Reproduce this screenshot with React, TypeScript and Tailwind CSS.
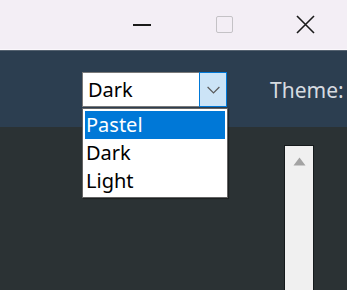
import { useState } from 'react'

const themes = ['Pastel', 'Dark', 'Light']

function TitleBar() {
  return (
    <div className="h-[50px] shrink-0 bg-[#f3eef5] border-b border-[#fbf8fc] flex items-center">
      <div className="flex-1" />
      <div className="w-[82px] h-full flex items-center justify-center">
        <div className="w-[18px] h-[2px] bg-[#1a1a1a]" />
      </div>
      <div className="w-[82px] h-full flex items-center justify-center">
        <div className="w-[17px] h-[17px] border-[1.5px] border-[#c4c2c6] rounded-[2px]" />
      </div>
      <div className="w-[82px] h-full flex items-center justify-center pr-[2px]">
        <svg width="19" height="19" viewBox="0 0 19 19">
          <path d="M1 1 L18 18 M18 1 L1 18" stroke="#1a1a1a" strokeWidth="1.6" />
        </svg>
      </div>
    </div>
  )
}

function ThemeCombo() {
  const [value] = useState('Dark')
  const [hovered] = useState('Pastel')

  return (
    <div className="relative w-[145px]">
      <div className="flex h-[35px] bg-white border border-[#7a7a7a]">
        <div className="flex-1 flex items-center pl-[5px] text-[20px] text-black leading-none">
          {value}
        </div>
        <div className="w-[28px] h-[35px] -mt-px -mr-px bg-[#cce4f7] border border-[#0078d7] flex items-center justify-center">
          <svg width="13" height="8" viewBox="0 0 13 8">
            <path d="M0.6 1 L6.5 6.9 L12.4 1" fill="none" stroke="#5a5a5a" strokeWidth="1.2" />
          </svg>
        </div>
      </div>
      <div className="absolute left-0 top-[36px] w-[146px] bg-white border border-[#646464] p-[2px] shadow-[1px_1px_1px_rgba(0,0,0,0.35)]">
        {themes.map((t) => (
          <div
            key={t}
            className={
              t === hovered
                ? 'h-[28px] flex items-center pl-[1px] text-[20px] leading-none bg-[#0078d7] text-white'
                : 'h-[28px] flex items-center pl-[1px] text-[20px] leading-none text-black'
            }
          >
            {t}
          </div>
        ))}
      </div>
    </div>
  )
}

export default function App() {
  return (
    <div
      className="w-[347px] h-[290px] overflow-hidden flex flex-col bg-[#2b3234]"
      style={{ fontFamily: '"Noto Sans", "Open Sans", sans-serif' }}
    >
      <TitleBar />
      <div className="h-[77px] bg-[#2c3e50] border-t border-[#556270] flex items-start pt-[21px] pl-[82px] shrink-0 relative z-10">
        <ThemeCombo />
        <div className="ml-[43px] mt-[5px] text-[21px] leading-[26px] text-[#d6dbe0] whitespace-nowrap">Theme:</div>
      </div>
      <div className="flex-1 min-h-0 pl-[284px] pt-[18px]">
        <div className="w-[30px] h-[200px] bg-[#f0f0f0] border border-[#151a1c] flex justify-center pt-[11px]">
          <svg width="13" height="9" viewBox="0 0 13 9">
            <path d="M6.5 0.5 L12.5 8.5 L0.5 8.5 Z" fill="#a3a3a3" />
          </svg>
        </div>
      </div>
    </div>
  )
}
